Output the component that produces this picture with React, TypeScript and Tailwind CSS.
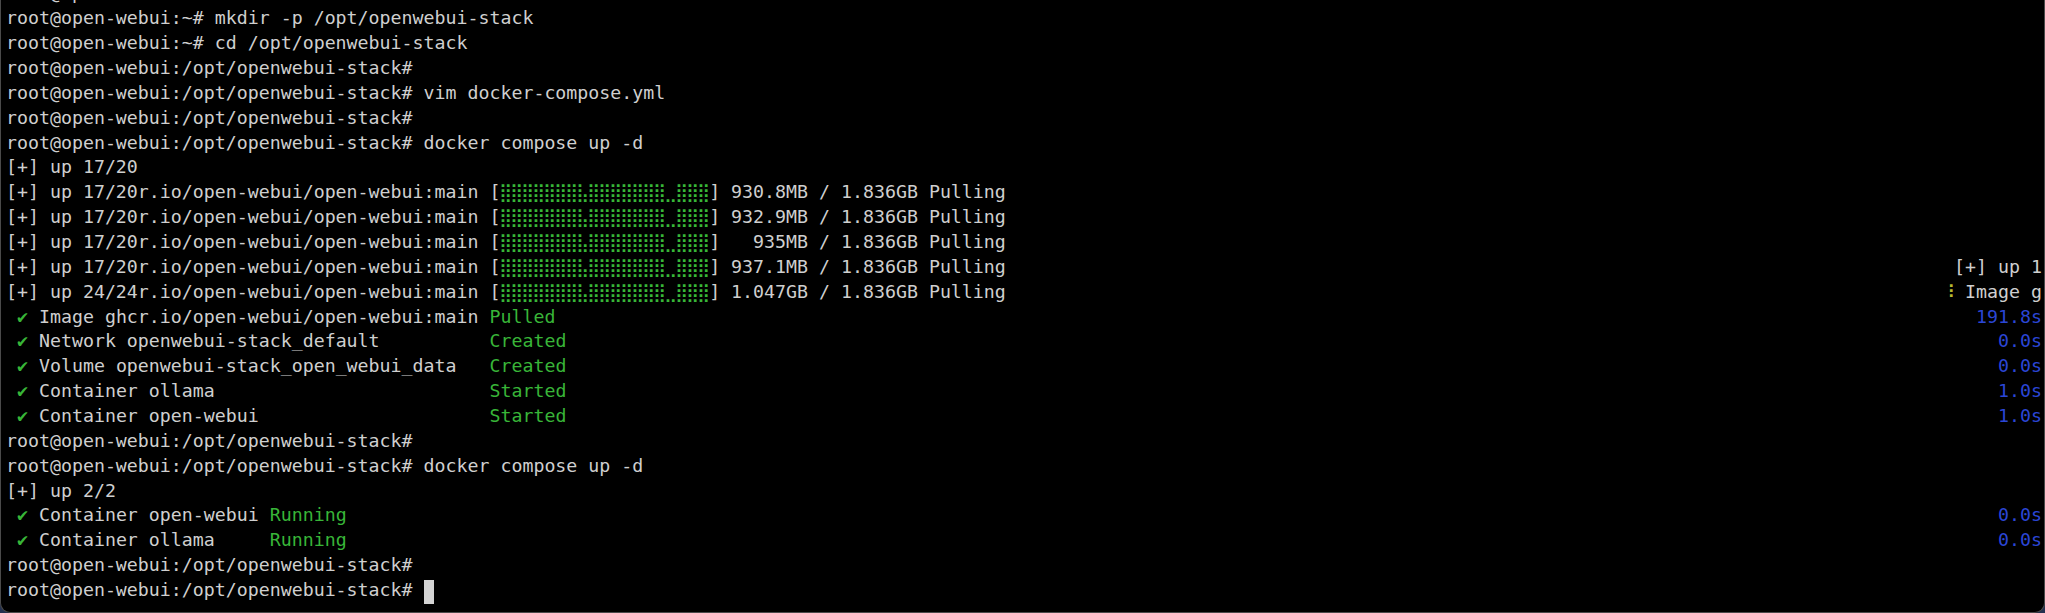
import React from "react";

type Seg = { t: string; c?: string; cells?: boolean };
type Line = { left: Seg[]; right?: Seg[] };

const G = "text-[#38b538]";
const B = "text-[#2b46d6]";
const Y = "text-[#b8b830]";

const PROMPT = "root@open-webui:/opt/openwebui-stack#";
const BAR = "⣿⣿⣿⣿⣿⣿⣿⣧⣿⣿⣿⣿⣿⣿⣿⣀⣿⣿⣿";

const pull = (head: string, size: string): Seg[] => [
    { t: `[+] up ${head}r.io/open-webui/open-webui:main [` },
    { t: BAR, c: G, cells: true },
    { t: `] ${size} / 1.836GB Pulling` },
];

const done = (name: string, status: string, time: string): Line => ({
    left: [{ t: " " }, { t: "✔", c: G, cells: true }, { t: " " + name }, { t: status, c: G }],
    right: [{ t: time, c: B }],
});

const lines: Line[] = [
    { left: [{ t: "root@open-webui:~# " }] },
    { left: [{ t: "root@open-webui:~# mkdir -p /opt/openwebui-stack" }] },
    { left: [{ t: "root@open-webui:~# cd /opt/openwebui-stack" }] },
    { left: [{ t: PROMPT }] },
    { left: [{ t: PROMPT + " vim docker-compose.yml" }] },
    { left: [{ t: PROMPT }] },
    { left: [{ t: PROMPT + " docker compose up -d" }] },
    { left: [{ t: "[+] up 17/20" }] },
    { left: pull("17/20", "930.8MB") },
    { left: pull("17/20", "932.9MB") },
    { left: pull("17/20", "  935MB") },
    { left: pull("17/20", "937.1MB"), right: [{ t: "[+] up 1" }] },
    { left: pull("24/24", "1.047GB"), right: [{ t: "⠸", c: Y, cells: true }, { t: " Image g" }] },
    done("Image ghcr.io/open-webui/open-webui:main ", "Pulled", "191.8s"),
    done("Network openwebui-stack_default          ", "Created", "0.0s"),
    done("Volume openwebui-stack_open_webui_data   ", "Created", "0.0s"),
    done("Container ollama                         ", "Started", "1.0s"),
    done("Container open-webui                     ", "Started", "1.0s"),
    { left: [{ t: PROMPT }] },
    { left: [{ t: PROMPT + " docker compose up -d" }] },
    { left: [{ t: "[+] up 2/2" }] },
    done("Container open-webui ", "Running", "0.0s"),
    done("Container ollama     ", "Running", "0.0s"),
    { left: [{ t: PROMPT }] },
];

// glyphs that come from a fallback font get forced into one terminal cell each
function Segs({ segs }: { segs: Seg[] }) {
    return (
        <span>
            {segs.map((s, i) =>
                s.cells ? (
                    <span key={i} className={s.c}>
                        {Array.from(s.t).map((ch, j) => (
                            <span key={j} className="inline-flex w-[1ch] justify-center">
                                {ch}
                            </span>
                        ))}
                    </span>
                ) : (
                    <span key={i} className={s.c}>
                        {s.t}
                    </span>
                )
            )}
        </span>
    );
}

export default function App() {
    return (
        <div className="h-[613px] w-[2045px] overflow-hidden bg-[#23304f]">
            <div className="h-full w-full overflow-hidden rounded-b-[10px] border-x border-b border-[#4a4a4a] bg-black">
                <div className="-mt-[18.6px] pl-[5px] pr-[2px] font-['DejaVu_Sans_Mono','Liberation_Mono',monospace] text-[18.25px] leading-[24.86px] whitespace-pre text-[#cfcfcf]">
                    {lines.map((line, i) => (
                        <div key={i} className="flex h-[24.86px] justify-between">
                            <Segs segs={line.left} />
                            {line.right && <Segs segs={line.right} />}
                        </div>
                    ))}
                    <div className="flex h-[24.86px]">
                        <span>{PROMPT + " "}</span>
                        <span className="relative top-[2px] inline-block h-[24px] w-[10px] bg-[#d4d4d4]" />
                    </div>
                </div>
            </div>
        </div>
    );
}
